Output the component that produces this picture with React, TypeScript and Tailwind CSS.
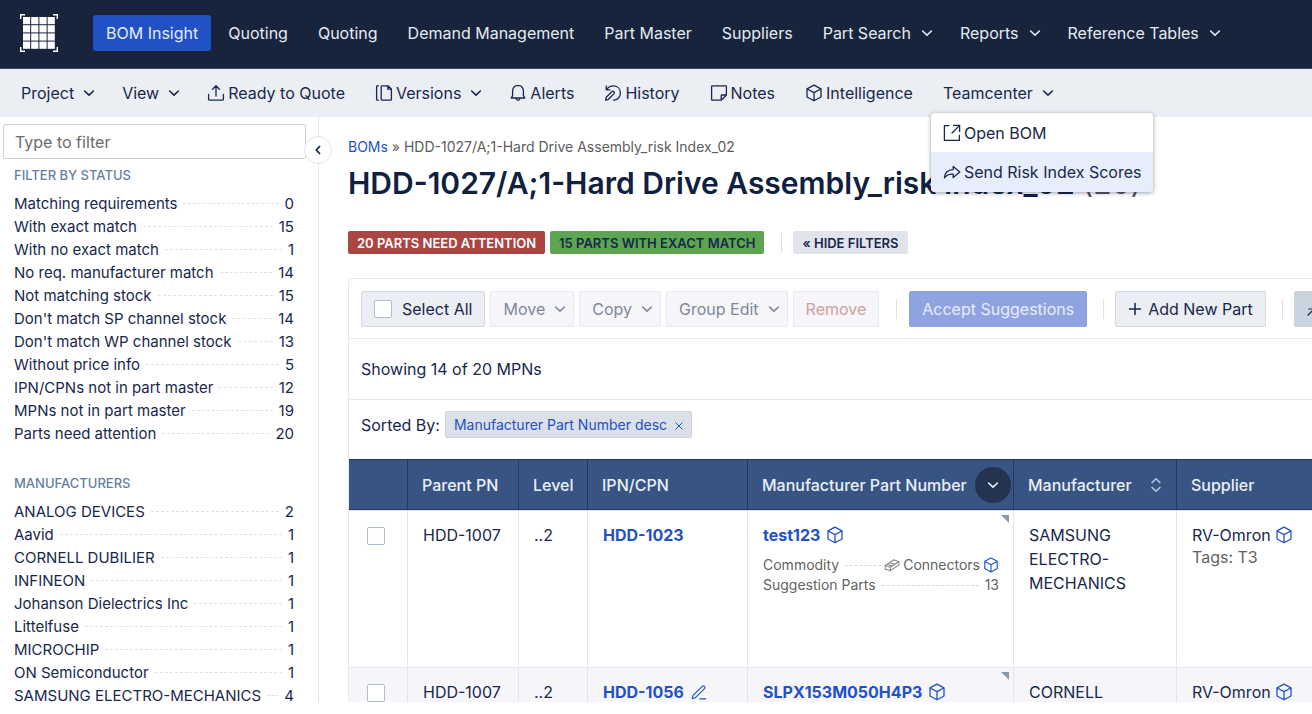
import React from 'react';

import clsx from 'clsx';

const NAV = [
  { label: 'BOM Insight', active: true },
  { label: 'Quoting' },
  { label: 'Quoting' },
  { label: 'Demand Management' },
  { label: 'Part Master' },
  { label: 'Suppliers' },
  { label: 'Part Search', menu: true },
  { label: 'Reports', menu: true },
  { label: 'Reference Tables', menu: true },
];

const STATUS_FILTERS = [
  { name: 'Matching requirements', count: 0 },
  { name: 'With exact match', count: 15 },
  { name: 'With no exact match', count: 1 },
  { name: 'No req. manufacturer match', count: 14 },
  { name: 'Not matching stock', count: 15 },
  { name: "Don't match SP channel stock", count: 14 },
  { name: "Don't match WP channel stock", count: 13 },
  { name: 'Without price info', count: 5 },
  { name: 'IPN/CPNs not in part master', count: 12 },
  { name: 'MPNs not in part master', count: 19 },
  { name: 'Parts need attention', count: 20 },
];

const MANUFACTURERS = [
  { name: 'ANALOG DEVICES', count: 2 },
  { name: 'Aavid', count: 1 },
  { name: 'CORNELL DUBILIER', count: 1 },
  { name: 'INFINEON', count: 1 },
  { name: 'Johanson Dielectrics Inc', count: 1 },
  { name: 'Littelfuse', count: 1 },
  { name: 'MICROCHIP', count: 1 },
  { name: 'ON Semiconductor', count: 1 },
  { name: 'SAMSUNG ELECTRO-MECHANICS', count: 4 },
];

const ROWS = [
  {
    id: 1,
    parent: 'HDD-1007',
    level: '..2',
    ipn: 'HDD-1023',
    mpn: 'test123',
    commodity: 'Connectors',
    suggestions: 13,
    manufacturer: 'SAMSUNG ELECTRO-MECHANICS',
    supplier: 'RV-Omron',
    tags: 'T3',
  },
  {
    id: 2,
    parent: 'HDD-1007',
    level: '..2',
    ipn: 'HDD-1056',
    editable: true,
    mpn: 'SLPX153M050H4P3',
    manufacturer: 'CORNELL',
    supplier: 'RV-Omron',
  },
];

type IconProps = { className?: string; children?: React.ReactNode };

const Icon = ({ className, children }: IconProps) => (
  <svg
    viewBox="0 0 18 18"
    fill="none"
    stroke="currentColor"
    strokeWidth="1.3"
    strokeLinecap="round"
    strokeLinejoin="round"
    aria-hidden="true"
    className={clsx('shrink-0', className)}
  >
    {children}
  </svg>
);

const Chevron = ({ className }: IconProps) => (
  <svg
    viewBox="0 0 12 8"
    fill="none"
    stroke="currentColor"
    strokeWidth="1.6"
    strokeLinecap="round"
    strokeLinejoin="round"
    aria-hidden="true"
    className={clsx('w-3 h-2 shrink-0', className)}
  >
    <path d="M1.6 2 6 6.2 10.4 2" />
  </svg>
);

const Cube = ({ className }: IconProps) => (
  <Icon className={className}>
    <path d="M9 1.2 16 4.8V13L9 16.8 2 13V4.8ZM2.2 5 9 8.6 15.8 5M9 8.6v8" />
  </Icon>
);

const Upload = () => (
  <Icon className="w-[18px] h-[18px]">
    <path d="M9 12V2M5.6 5.2 9 1.8l3.4 3.4M1.6 10.4v4.8q0 1 1 1h12.8q1 0 1-1v-4.8" />
  </Icon>
);

// stacked pages with a folded corner
const Versions = () => (
  <Icon className="w-[18px] h-[18px]">
    <path d="M7 1.8h6L16.4 5v10.4q0 .8-.8.8H7q-.8 0-.8-.8V2.6q0-.8.8-.8ZM12.8 2v3.2h3.4M3.400 1.800h-1q-.8 0-.8.8v12.800q0 .8.8.8h1" />
  </Icon>
);

const Bell = () => (
  <Icon className="w-[18px] h-[18px]">
    <path d="M9 1.4C5.6 1.4 3.6 3.8 3.6 7v4.6L2.2 14h13.6l-1.4-2.400V7c0-3.200-2-5.600-5.400-5.600ZM7 14.200c.2 1.600.9 2.200 2 2.200s1.800-.6 2-2.200" />
  </Icon>
);

const History = () => (
  <Icon className="w-[18px] h-[18px]">
    <path d="M2.200 2v3.800H6M2.500 5.400C4.400 2.800 7 1.600 9.800 1.800c4 .3 6.600 3.400 6.600 7.200 0 4-2.800 7-6.800 7.200M1.600 16.200l.7-3 5.700-5.700c1.400-1 3 .7 2.100 2.100l-5.700 5.700Z" />
  </Icon>
);

const Note = () => (
  <Icon className="w-[18px] h-[18px]">
    <path d="M2.400 1.800h13.200q.8 0 .8.8V11L11.200 16.200H2.400q-.8 0-.8-.8V2.600q0-.8.8-.8ZM11.200 16v-4.200q0-.8.8-.8h4.200" />
  </Icon>
);

const External = () => (
  <Icon className="w-[18px] h-[18px]">
    <path d="M6 1.600H1.400v14.800h15v-5M10.600 1.400h6v6M16.400 1.600 9 9" />
  </Icon>
);

const Share = () => (
  <Icon className="w-[18px] h-[18px]">
    <path d="M10.200 3.400 16.800 9l-6.600 5.600v-3.400C6.400 10.800 3.600 12 1.400 14.800 1.800 9.800 5 6.800 10.200 6.600Z" />
  </Icon>
);

const Pencil = () => (
  <Icon className="w-4 h-4">
    <path d="M2.400 12.800 12.600 2.600c1.600-1.400 4 .8 2.600 2.600L5 15.400l-3.600 1ZM10 16.800h6.600" />
  </Icon>
);

const Connector = () => (
  <svg viewBox="0 0 14 12" fill="none" stroke="#8b8b8b" aria-hidden="true" className="w-4 h-3.5">
    <path d="M1 6.500 8.500 1.500l4.500 1.500v3L5.500 11 1 9.500ZM1 6.500 5.500 8 13 3M5.500 8v3M3 5.500l4.500 1.300M5 4l4.500 1.300" />
  </svg>
);

const Logo = () => (
  <svg viewBox="0 0 38 38" aria-hidden="true" className="w-[38px] h-[38px] shrink-0">
    <path d="M.7 5V.7H5M33 .7h4.300V5M37.300 33v4.300H33M5 37.300H.7V33" fill="none" stroke="#fff" strokeWidth="1.400" />
    {[0, 1, 2, 3].map((y) =>
      [0, 1, 2, 3].map((x) => (
        <rect key={`${x}-${y}`} x={3 + x * 8.2} y={3 + y * 8.2} width="7.200" height="7.200" fill="#fff" />
      )),
    )}
  </svg>
);

const SUBNAV = [
  { label: 'Project', menu: true },
  { label: 'View', menu: true },
  { label: 'Ready to Quote', icon: <Upload /> },
  { label: 'Versions', icon: <Versions />, menu: true },
  { label: 'Alerts', icon: <Bell /> },
  { label: 'History', icon: <History /> },
  { label: 'Notes', icon: <Note /> },
  { label: 'Intelligence', icon: <Cube className="w-[18px] h-[18px]" /> },
];

const Header = () => (
  <header className="flex items-center h-[69px] pl-5 pb-0.5 border-b border-[#3a4660] bg-[#18243c] shrink-0">
    <a href="#home" aria-label="Home">
      <Logo />
    </a>
    <nav className="flex items-center gap-1 ml-[35px] whitespace-nowrap">
      {NAV.map((item, i) => (
        <a
          key={i}
          href="#nav"
          className={clsx('flex items-center h-9 px-[13px] rounded-[3px]', {
            'bg-[#2251c5] text-[#e4ecfb]': item.active,
            'text-[#e3ebf3]': !item.active,
          })}
        >
          {item.label}
          {item.menu && <Chevron className="ml-2.5 -mr-[3px]" />}
        </a>
      ))}
    </nav>
  </header>
);

const SubNav = () => (
  <nav className="flex items-center h-12 pl-[21px] gap-[30px] bg-[#ebeef3] whitespace-nowrap shrink-0">
    {SUBNAV.map((item) => (
      <button key={item.label} type="button" className="flex items-center gap-[3px]">
        {item.icon}
        {item.label}
        {item.menu && <Chevron className="ml-1.5 -mr-[3px]" />}
      </button>
    ))}
    <div className="relative">
      <button type="button" aria-expanded="true" className="flex items-center gap-[3px]">
        Teamcenter
        <Chevron className="ml-1.5" />
      </button>
      <div className="absolute z-20 overflow-hidden bg-white rounded-[4px] shadow-[0_1px_4px_rgba(24,36,60,0.45)] top-8 -left-3 w-[222px]">
        <button type="button" className="flex items-center w-full gap-[3px] px-3 h-[39px]">
          <External />
          Open BOM
        </button>
        <button type="button" className="flex items-center w-full gap-[3px] px-3 h-10 bg-[#e6edfb]">
          <Share />
          Send Risk Index Scores
        </button>
      </div>
    </div>
  </nav>
);

type FilterListProps = { title: string; items: { name: string; count: number }[] };

const FilterList = ({ title, items }: FilterListProps) => (
  <section className="pl-3.5 pr-6">
    <h2 className="text-[13px] leading-5 font-medium text-[#64809f] uppercase">{title}</h2>
    <ul className="mt-[7px] text-[15px] leading-[23px]">
      {items.map((item) => (
        <li key={item.name}>
          <a href="#filter" className="flex items-center whitespace-nowrap">
            {item.name}
            <span className="flex-1 mx-1.5 border-t border-dashed border-[#dfe3e9]" />
            {item.count}
          </a>
        </li>
      ))}
    </ul>
  </section>
);

const Sidebar = () => (
  <aside className="relative w-[319px] border-r border-[#e2e5ec] shrink-0">
    <div className="pt-[7px] pl-[3px] pr-3">
      <input
        type="text"
        aria-label="Filter"
        placeholder="Type to filter"
        className="block w-full px-[11px] border border-[#c9d2da] rounded-[2px] h-[35px] placeholder:text-[#6b6b6b]"
      />
    </div>
    <div className="mt-1.5 space-y-7">
      <FilterList title="Filter by status" items={STATUS_FILTERS} />
      <FilterList title="Manufacturers" items={MANUFACTURERS} />
    </div>
    <button
      type="button"
      aria-label="Collapse sidebar"
      className="absolute z-10 flex items-center justify-center bg-white border border-[#e2e5ec] rounded-full top-[19px] -right-3.5 w-7 h-7"
    >
      <svg viewBox="0 0 6 10" fill="none" stroke="currentColor" strokeWidth="1.800" className="w-1.5 h-2.5">
        <path d="M5 1 1.400 5 5 9" />
      </svg>
    </button>
  </aside>
);

const Divider = () => <span className="w-px h-5 bg-[#dde1e8]" />;

const BUTTON = 'flex items-center justify-center h-9 px-3 border rounded-[2px] shrink-0';
const DISABLED = 'bg-[#f5f5fa] border-[#e6e9ee] text-[#7f8899]';

const Toolbar = () => (
  <div className="flex items-center gap-[5px] px-3 h-[60px] border-b border-[#e6e9ee] whitespace-nowrap">
    <label className={clsx(BUTTON, 'bg-[#ebeef3] border-[#d5dae1] gap-2.5')}>
      <input
        type="checkbox"
        className="w-[18px] h-[18px] bg-white border border-[#afbfd2] rounded-[2px] appearance-none"
      />
      Select All
    </label>
    {['Move', 'Copy', 'Group Edit'].map((label) => (
      <button key={label} type="button" disabled className={clsx(BUTTON, DISABLED)}>
        {label}
        <Chevron className="ml-[9px] -mr-[5px]" />
      </button>
    ))}
    <button type="button" disabled className={clsx(BUTTON, 'bg-[#f5f5fa] border-[#e6e9ee] text-[#cf9f9f]')}>
      Remove
    </button>
    <div className="flex items-center gap-3 ml-3">
      <Divider />
      <button type="button" disabled className={clsx(BUTTON, 'bg-[#8fa3e0] border-[#8fa3e0] text-[#e6edfc]')}>
        Accept Suggestions
      </button>
    </div>
    <div className="flex items-center gap-[11px] ml-[11px]">
      <Divider />
      <button type="button" className={clsx(BUTTON, 'bg-[#ebeef3] border-[#d5dae1] gap-1.5')}>
        <Icon className="w-3.5 h-3.5">
          <path strokeWidth="2" d="M9 2v14M2 9h14" />
        </Icon>
        Add New Part
      </button>
    </div>
    <div className="flex items-center gap-[11px] ml-[11px]">
      <Divider />
      <button type="button" aria-label="Expand" className={clsx(BUTTON, 'bg-[#c9d5de] border-[#c9d5de]')}>
        <Icon className="w-4 h-4">
          <path d="M1 16 8 9M2 9h6v6M17 2l-6 6" />
        </Icon>
      </button>
    </div>
  </div>
);

const TH = 'h-[51px] px-3.5 font-medium text-left border-r border-y border-[#24385f] last:border-r-0';
const TD =
  'px-[15px] pt-3 align-top border-r border-b-4 border-r-[#e0e5eb] border-b-white last:border-r-0 border-t border-t-[#e2e5ec]';

const PartsTable = () => (
  <table className="w-full border-separate table-fixed border-spacing-0">
    <colgroup>
      <col className="w-[59px]" />
      <col className="w-[111px]" />
      <col className="w-[69px]" />
      <col className="w-40" />
      <col className="w-[266px]" />
      <col className="w-[163px]" />
      <col />
    </colgroup>
    <thead className="bg-[#385482] text-[#eaf0f9]">
      <tr>
        <th aria-label="Select" className={TH} />
        <th className={TH}>Parent PN</th>
        <th className={TH}>Level</th>
        <th className={TH}>IPN/CPN</th>
        <th className={clsx(TH, 'whitespace-nowrap')}>
          <div className="flex items-center justify-between -mr-3">
            Manufacturer Part Number
            <button
              type="button"
              aria-label="Sort by part number"
              className="flex items-center justify-center bg-[#24334f] rounded-full w-9 h-9"
            >
              <Chevron />
            </button>
          </div>
        </th>
        <th className={TH}>
          <div className="flex items-center justify-between">
            Manufacturer
            <svg viewBox="0 0 12 16" fill="none" stroke="#b9c8e2" strokeWidth="1.500" className="w-3 h-4">
              <path d="M1.600 6 6 1.800 10.400 6M1.600 10 6 14.200 10.400 10" />
            </svg>
          </div>
        </th>
        <th className={TH}>Supplier</th>
      </tr>
    </thead>
    <tbody>
      {ROWS.map((row) => (
        <tr key={row.id} className="h-[157px] even:bg-[#f5f5fa]">
          <td className={TD}>
            <input
              type="checkbox"
              aria-label={`Select ${row.mpn}`}
              className="block w-[18px] h-[18px] mt-1 ml-[3px] bg-white border border-[#afbfd2] rounded-[2px] appearance-none"
            />
          </td>
          <td className={TD}>{row.parent}</td>
          <td className={TD}>{row.level}</td>
          <td className={TD}>
            <a href="#ipn" className="inline-flex items-center gap-[7px] font-bold text-[#2251c5]">
              {row.ipn}
              {row.editable && <Pencil />}
            </a>
          </td>
          <td className={clsx(TD, 'relative')}>
            <span className="absolute border-t-8 border-l-8 top-1 right-1 border-t-[#8a98ad] border-l-transparent" />
            <a href="#mpn" className="inline-flex items-center gap-1.5 font-bold text-[#2251c5]">
              {row.mpn}
              <Cube className="w-[18px] h-[18px]" />
            </a>
            {row.commodity && (
              <dl className="mt-2 text-sm leading-5 text-[#636363] -mr-px">
                <div className="flex items-center">
                  <dt>Commodity</dt>
                  <dd className="flex items-center flex-1 gap-[3px]">
                    <span className="flex-1 ml-1.5 border-t border-dashed border-[#d9d9d9]" />
                    <Connector />
                    {row.commodity}
                    <Cube className="w-4 h-4 text-[#2251c5]" />
                  </dd>
                </div>
                <div className="flex items-center">
                  <dt>Suggestion Parts</dt>
                  <dd className="flex items-center flex-1 gap-1.5">
                    <span className="flex-1 ml-1.5 border-t border-dashed border-[#d9d9d9]" />
                    {row.suggestions}
                  </dd>
                </div>
              </dl>
            )}
          </td>
          <td className={TD}>{row.manufacturer}</td>
          <td className={TD}>
            <span className="flex items-center gap-1">
              {row.supplier}
              <Cube className="w-[18px] h-[18px] text-[#2251c5]" />
            </span>
            {row.tags && <span className="block leading-5 text-[#636363]">Tags: {row.tags}</span>}
          </td>
        </tr>
      ))}
    </tbody>
  </table>
);

const BADGE = 'px-[9px] h-[23px] rounded-[2px] whitespace-nowrap';

const App = () => (
  <div className="flex flex-col h-screen pb-3 overflow-hidden font-['Inter',sans-serif] text-base text-[#18284b] bg-white">
    <Header />
    <SubNav />
    <div className="flex flex-1 min-h-0 overflow-hidden">
      <Sidebar />
      <main className="flex-1 min-w-0 pt-5 overflow-hidden pl-[29px]">
        <p className="text-sm leading-5 text-[#5c5c5c]">
          <a href="#boms" className="text-[#2251c5]">
            BOMs
          </a>{' '}
          » HDD-1027/A;1-Hard Drive Assembly_risk Index_02
        </p>
        <h1 className="mt-1.5 text-3xl leading-10 font-semibold text-[#10203f] whitespace-nowrap">
          HDD-1027/A;1-Hard Drive Assembly_risk Index_02{' '}
          <span className="font-normal text-[#555]">(20)</span>
        </h1>
        <div className="flex items-center gap-[5px] mt-7 text-[13px] leading-5 font-semibold">
          <button type="button" className={clsx(BADGE, 'bg-[#ac4442] text-white')}>
            20 PARTS NEED ATTENTION
          </button>
          <button type="button" className={clsx(BADGE, 'bg-[#5da551]')}>
            15 PARTS WITH EXACT MATCH
          </button>
          <span className="w-px h-5 ml-3 mr-1.5 bg-[#dde1e8]" />
          <button type="button" className={clsx(BADGE, 'bg-[#e1e5eb]')}>
            « HIDE FILTERS
          </button>
        </div>
        <div className="mt-6 border border-[#e6e9ee] rounded-[4px] min-w-[1120px]">
          <Toolbar />
          <p className="flex items-center px-3 h-[61px] border-b border-[#e6e9ee]">Showing 14 of 20 MPNs</p>
          <div className="flex items-center gap-[5px] px-3 pb-2.5 h-[59px]">
            Sorted By:
            <button
              type="button"
              className="flex items-center h-[27px] gap-2 px-2 text-sm bg-[#dce0e8] border border-[#d0d5dd] rounded-[2px] text-[#2251c5]"
            >
              Manufacturer Part Number desc
              <svg viewBox="0 0 8 8" fill="none" stroke="currentColor" className="w-2 h-2 mt-0.5">
                <path d="m.5.5 7 7m0-7-7 7" />
              </svg>
            </button>
          </div>
          <PartsTable />
        </div>
      </main>
    </div>
  </div>
);

export default App;
